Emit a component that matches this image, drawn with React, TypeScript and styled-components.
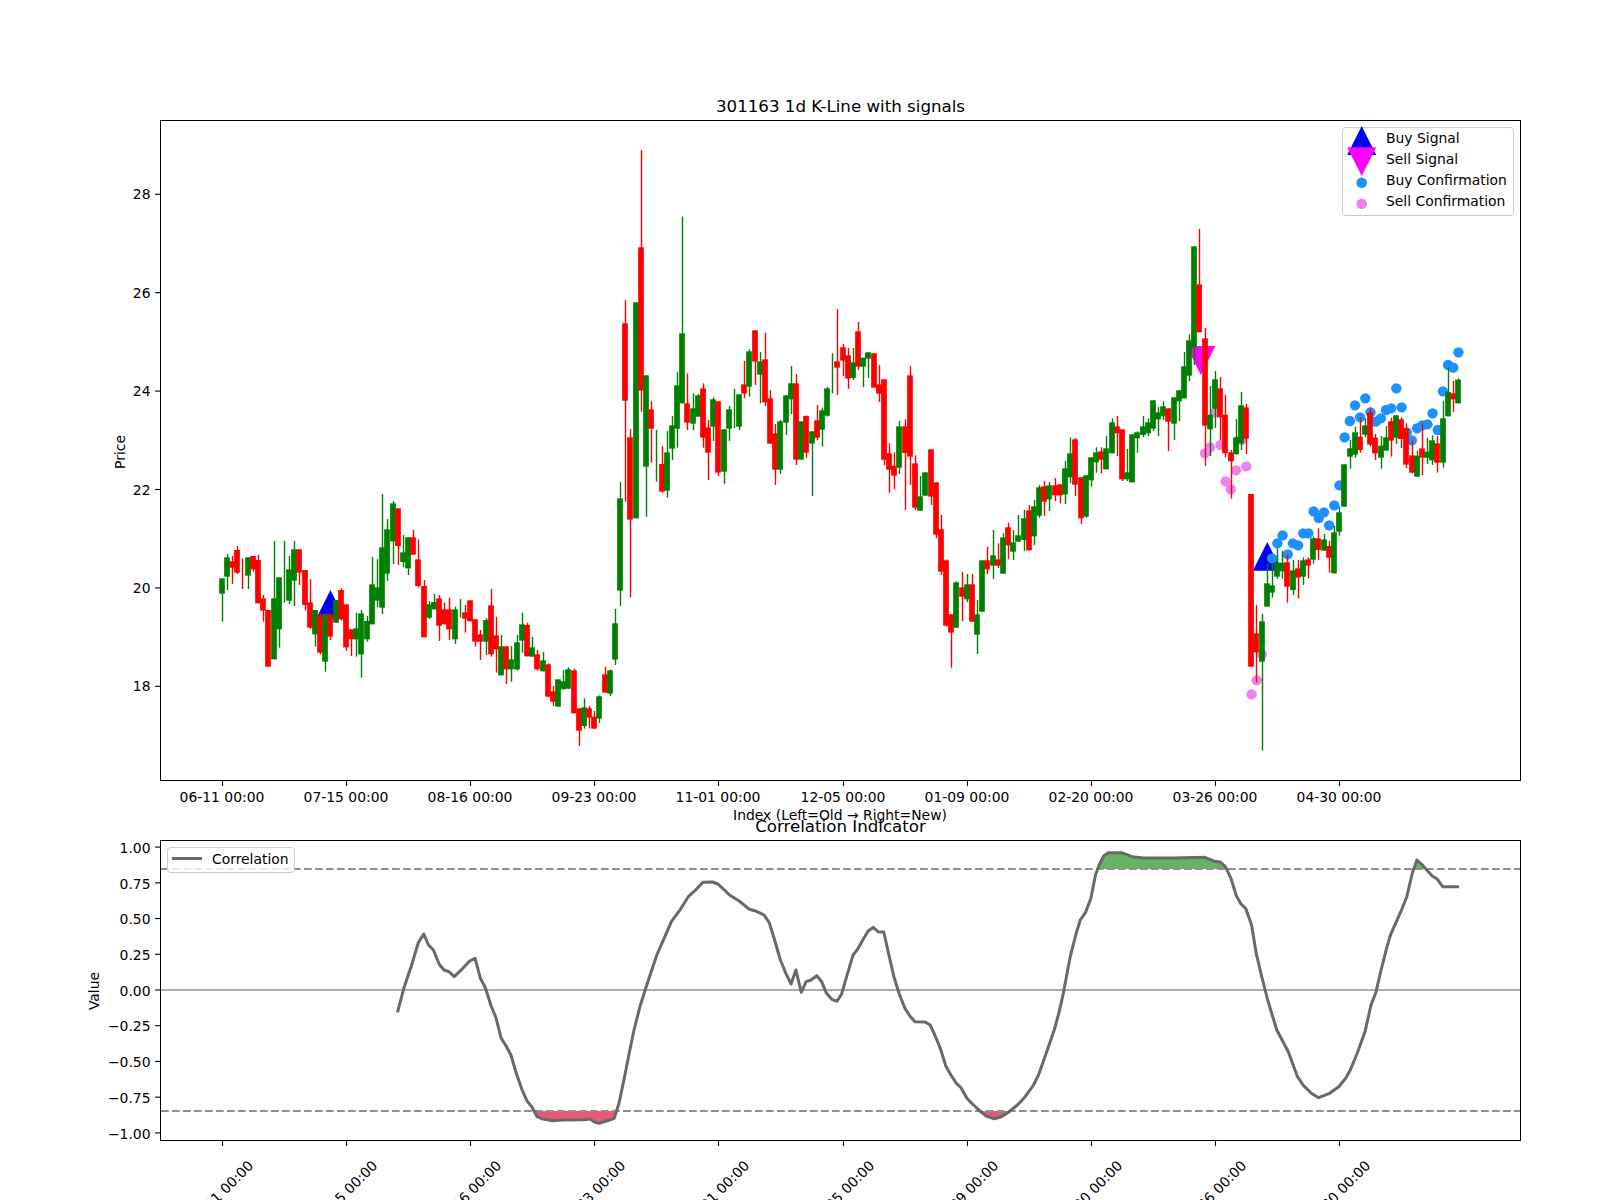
import React from 'react';
import styled, { createGlobalStyle } from 'styled-components';

type Row = [string, number, number, number, number];
type Point = [number, number];

const GlobalStyle = createGlobalStyle`
  html, body {
    margin: 0;
    padding: 0;
    background: #fff;
    overflow: hidden;
  }
  body {
    font-family: "DejaVu Sans", sans-serif;
    font-size: 13.9px;
    color: #000;
  }
`;

// candle rows are [colour, high, bodyTop, bodyBottom, low], measured on 3x crops: page y = oy + value / 3
const candleGroups: { oy: number; rows: Row[] }[] = [
  {
    oy: 480,
    rows: [
      ['g', 295, 295, 341, 425], ['g', 222, 232, 290, 330], ['r', 228, 244, 263, 312], ['r', 198, 210, 278, 282],
      ['r', 235, 281, 281, 327], ['g', 232, 232, 287, 327], ['r', 228, 228, 268, 275], ['r', 225, 240, 370, 370],
      ['r', 345, 355, 392, 425], ['r', 390, 390, 560, 560], ['g', 183, 355, 538, 538], ['g', 292, 292, 448, 503],
      ['g', 183, 275, 275, 368], ['g', 228, 268, 362, 372], ['g', 183, 208, 302, 378], ['r', 208, 208, 278, 315],
      ['r', 270, 270, 375, 392], ['r', 297, 367, 443, 447], ['g', 390, 390, 463, 500], ['r', 400, 405, 518, 523],
      ['g', 400, 402, 545, 575], ['r', 403, 403, 470, 480], ['g', 360, 360, 428, 428], ['r', 325, 330, 418, 422],
      ['r', 373, 373, 502, 513], ['r', 448, 448, 478, 528], ['g', 398, 445, 478, 530], ['g', 390, 400, 523, 593],
      ['g', 408, 423, 478, 485], ['g', 231, 313, 433, 433], ['g', 237, 322, 362, 382], ['g', 42, 202, 383, 402],
      ['g', 117, 148, 281, 303], ['g', 63, 70, 184, 252], ['r', 85, 85, 198, 255], ['g', 165, 217, 246, 262],
      ['g', 172, 172, 265, 285], ['r', 150, 172, 224, 224], ['r', 178, 238, 318, 322],
    ],
  },
  {
    oy: 480,
    rows: [
      ['r', 300, 318, 472, 472], ['g', 363, 373, 413, 417], ['g', 342, 366, 388, 388], ['r', 345, 355, 437, 483],
      ['r', 368, 388, 433, 433], ['r', 353, 388, 448, 480], ['g', 380, 388, 478, 492], ['g', 357, 385, 385, 413],
      ['r', 375, 397, 416, 458], ['r', 361, 361, 424, 424], ['r', 418, 418, 485, 500], ['r', 450, 463, 485, 540],
      ['g', 414, 420, 485, 525], ['r', 327, 376, 523, 530], ['r', 410, 466, 508, 578], ['g', 465, 499, 586, 586],
      ['r', 499, 499, 568, 612], ['g', 498, 538, 568, 605], ['g', 465, 487, 568, 572], ['g', 398, 433, 482, 518],
      ['r', 428, 435, 529, 529], ['g', 470, 502, 530, 530], ['r', 510, 523, 568, 572], ['g', 516, 541, 574, 574],
      ['r', 550, 553, 650, 650], ['r', 618, 634, 665, 678], ['g', 598, 598, 680, 680], ['g', 570, 604, 628, 628],
      ['g', 562, 568, 626, 626], ['r', 566, 571, 700, 700], ['r', 685, 685, 752, 798], ['g', 655, 682, 738, 746],
      ['r', 678, 685, 713, 745], ['r', 693, 710, 746, 746], ['g', 646, 649, 716, 729], ['r', 560, 583, 638, 638],
      ['g', 569, 571, 641, 648], ['g', 387, 430, 539, 555], ['g', 6, 55, 332, 378],
    ],
  },
  {
    oy: 140,
    rows: [
      ['r', 480, 550, 782, 1085], ['r', 867, 892, 1139, 1372], ['g', 487, 487, 1135, 1135], ['r', 30, 322, 752, 815],
      ['g', 706, 706, 980, 1130], ['r', 783, 808, 866, 968], ['g', 870, 948, 948, 1025], ['r', 918, 972, 1055, 1058],
      ['g', 873, 937, 1052, 1073], ['g', 828, 856, 926, 960], ['g', 696, 736, 866, 923], ['g', 230, 580, 790, 790],
      ['r', 700, 790, 848, 870], ['g', 760, 805, 851, 870], ['g', 762, 766, 830, 830], ['r', 730, 745, 893, 923],
      ['r', 840, 862, 938, 1020], ['g', 772, 778, 860, 903], ['r', 784, 784, 998, 1008], ['g', 868, 868, 995, 1032],
      ['g', 798, 808, 866, 903], ['g', 746, 805, 805, 864], ['g', 763, 763, 860, 870], ['r', 663, 733, 761, 775],
      ['g', 628, 634, 740, 770], ['r', 571, 571, 665, 735], ['g', 636, 664, 704, 790], ['r', 578, 658, 787, 798],
      ['r', 750, 775, 911, 911], ['r', 852, 880, 989, 1035], ['g', 840, 844, 989, 1002], ['g', 766, 766, 848, 885],
      ['g', 678, 730, 778, 822], ['r', 702, 730, 959, 975], ['g', 844, 844, 959, 959], ['r', 826, 828, 938, 953],
      ['g', 874, 874, 911, 1068], ['r', 795, 841, 893, 900], ['g', 803, 811, 869, 920], ['g', 741, 745, 827, 830],
      ['g', 640, 700, 700, 760], ['r', 507, 664, 683, 765],
    ],
  },
  {
    oy: 290,
    rows: [
      ['r', 162, 172, 212, 258], ['r', 174, 196, 266, 297], ['g', 174, 217, 264, 270], ['r', 96, 124, 230, 240],
      ['g', 203, 203, 230, 291], ['g', 187, 187, 206, 264], ['r', 190, 190, 293, 293], ['r', 225, 283, 311, 336],
      ['r', 268, 268, 509, 525], ['r', 460, 490, 539, 608], ['r', 487, 527, 557, 598], ['g', 393, 409, 533, 552],
      ['r', 388, 409, 489, 660], ['r', 228, 256, 500, 585], ['r', 496, 520, 653, 660], ['g', 558, 619, 662, 662],
      ['g', 547, 547, 617, 617], ['r', 478, 478, 620, 645], ['r', 577, 577, 734, 745], ['r', 675, 718, 845, 855],
      ['r', 808, 811, 1007, 1010], ['r', 973, 973, 1028, 1133], ['g', 874, 877, 1013, 1013], ['r', 846, 892, 920, 993],
      ['g', 852, 883, 928, 937], ['r', 852, 883, 995, 995], ['g', 930, 973, 1034, 1092], ['g', 811, 811, 965, 965],
      ['r', 770, 811, 838, 852], ['g', 720, 796, 827, 867], ['r', 760, 808, 827, 834], ['g', 730, 742, 851, 851],
      ['r', 698, 712, 766, 808], ['g', 720, 757, 785, 810], ['g', 675, 736, 755, 755], ['g', 660, 685, 750, 783],
      ['r', 645, 661, 781, 781], ['g', 630, 649, 739, 765], ['g', 585, 592, 677, 683], ['r', 573, 589, 635, 678],
      ['g', 576, 586, 628, 663], ['r', 564, 586, 616, 633], ['r', 583, 583, 616, 640],
    ],
  },
  {
    oy: 220,
    rows: [
      ['g', 723, 745, 823, 852], ['g', 652, 700, 772, 790], ['r', 654, 658, 794, 828], ['r', 772, 772, 895, 912],
      ['g', 766, 766, 890, 893], ['g', 712, 712, 781, 800], ['g', 682, 697, 727, 758], ['r', 682, 694, 719, 760],
      ['g', 648, 685, 748, 748], ['g', 595, 607, 700, 700], ['r', 588, 619, 640, 708], ['r', 628, 628, 778, 783],
      ['g', 687, 757, 778, 783], ['g', 643, 643, 787, 787], ['g', 634, 637, 655, 698], ['g', 588, 619, 645, 651],
      ['g', 595, 607, 640, 648], ['g', 541, 541, 626, 633], ['g', 561, 577, 598, 648], ['g', 544, 559, 589, 600],
      ['r', 565, 565, 605, 693], ['g', 532, 532, 611, 660], ['g', 511, 511, 544, 603], ['g', 396, 439, 535, 535],
      ['g', 343, 361, 467, 483], ['g', 79, 79, 382, 435], ['r', 27, 193, 337, 337], ['r', 324, 355, 617, 738],
      ['g', 498, 584, 628, 708], ['g', 453, 478, 566, 624], ['r', 471, 505, 592, 660], ['r', 525, 584, 700, 712],
      ['r', 690, 697, 724, 836], ['g', 597, 652, 703, 703], ['g', 516, 556, 670, 690], ['r', 552, 562, 656, 702],
    ],
  },
  {
    oy: 330,
    rows: [
      ['r', 492, 492, 1010, 1010], ['r', 825, 910, 967, 1058], ['g', 852, 874, 995, 1262], ['g', 700, 760, 830, 830],
      ['g', 700, 766, 788, 803], ['g', 655, 698, 740, 746], ['g', 663, 698, 724, 747], ['r', 675, 697, 770, 818],
      ['g', 690, 721, 780, 795], ['r', 690, 715, 743, 806], ['g', 682, 691, 740, 765], ['r', 682, 688, 707, 745],
      ['g', 620, 625, 689, 701], ['r', 595, 625, 660, 690], ['g', 612, 628, 662, 662], ['r', 632, 648, 683, 728],
      ['g', 588, 607, 730, 730], ['g', 530, 547, 605, 617], ['g', 403, 403, 530, 530], ['g', 330, 355, 380, 416],
      ['g', 290, 307, 374, 383], ['r', 262, 320, 360, 368], ['g', 265, 286, 314, 322], ['r', 232, 247, 344, 350],
      ['r', 312, 323, 370, 390], ['g', 318, 347, 383, 416], ['g', 288, 322, 362, 362], ['r', 263, 274, 332, 380],
      ['g', 256, 256, 323, 342], ['r', 262, 268, 327, 354], ['r', 280, 295, 404, 414], ['r', 333, 376, 428, 430],
      ['g', 362, 377, 440, 440], ['r', 280, 355, 383, 435], ['g', 323, 365, 383, 402], ['g', 316, 331, 391, 405],
      ['r', 318, 340, 398, 428], ['g', 213, 265, 398, 413], ['g', 113, 186, 259, 259], ['r', 153, 190, 208, 246],
      ['g', 145, 149, 220, 220],
    ],
  },
];

const candles = candleGroups.flatMap(({ oy, rows }) =>
  rows.map(([c, high, top, bottom, low]) => ({
    colour: c === 'g' ? '#008000' : '#ff0000',
    high: oy + high / 3,
    top: oy + top / 3,
    bottom: oy + bottom / 3,
    low: oy + low / 3,
  })),
);

const barX = (i: number) => 221.8 + 5.173 * i;

const buyDots = [685, 640, 616, 673, 640, 646, 610, 610, 544, 564, 547, 586, 526, 466, 322, 273, 226, 262, 205, 247, 275, 265, 240, 235, 175, 232, 307, 331, 295, 286, 283, 250, 300, 184, 105, 113, 67]
  .map((y, k): Point => [barX(203 + k) + 0.3, 330 + y / 3]);
const sellDots = [370, 352, 248, 345, 454, 478, 421, 330, 409, 1093, 1051, 973]
  .map((y, k): Point => [barX(190 + k) + 0.3, 330 + y / 3]);

const dateLabels = ['06-11 00:00', '07-15 00:00', '08-16 00:00', '09-23 00:00', '11-01 00:00', '12-05 00:00', '01-09 00:00', '02-20 00:00', '03-26 00:00', '04-30 00:00'];
const tickX = (k: number) => Math.round(barX(24 * k)) + 0.5;

const priceY = (v: number) => 194.3 + (28 - v) * 49.2;
const corrY = (v: number) => 990 - v * 142.9;

const leftCurve: Point[] = [
  [655, 667], [668, 595], [683, 530], [698, 458], [709, 432], [719, 465], [729, 480], [741, 523], [751, 540], [761, 545], [772, 560], [783, 545], [804, 513], [815, 505], [826, 565], [836, 592], [848, 648], [858, 682], [869, 745], [879, 768], [889, 795], [900, 850], [912, 900], [922, 932], [932, 950], [943, 980], [953, 986], [975, 992], [995, 990], [1040, 989], [1052, 987], [1061, 996], [1071, 1000], [1091, 991], [1102, 985], [1112, 940], [1122, 870], [1133, 790], [1143, 720], [1155, 650], [1168, 590], [1190, 495], [1205, 445], [1220, 395], [1240, 355], [1255, 320], [1270, 300], [1285, 277], [1305, 276], [1316, 282], [1328, 298], [1340, 315], [1360, 333], [1381, 358], [1392, 362], [1411, 375], [1422, 398], [1433, 450], [1445, 510], [1456, 550], [1467, 582], [1477, 540], [1488, 607], [1498, 575], [1508, 570], [1520, 557], [1530, 575], [1540, 610], [1551, 628], [1562, 634],
];
const rightCurve: Point[] = [
  [47, 612], [58, 560], [72, 495], [82, 478], [94, 448], [105, 423], [116, 412], [127, 426], [139, 426], [150, 495], [161, 560], [172, 610], [185, 655], [197, 680], [207, 695], [229, 696], [240, 705], [250, 735], [262, 775], [274, 828], [285, 855], [297, 880], [307, 893], [320, 925], [332, 942], [350, 965], [362, 978], [380, 986], [395, 980], [412, 965], [430, 945], [447, 920], [465, 885], [476, 855], [490, 800], [510, 720], [520, 670], [530, 610], [545, 500], [558, 430], [567, 390], [578, 368], [590, 325], [600, 255], [608, 225], [618, 198], [628, 188], [657, 188], [680, 200], [705, 204], [770, 204], [838, 202], [860, 214], [872, 216], [883, 230], [895, 265], [907, 318], [917, 342], [927, 355], [940, 405], [950, 490], [962, 560], [975, 630], [985, 675], [995, 720], [1020, 785], [1040, 860], [1052, 885], [1070, 910], [1086, 923], [1110, 910], [1130, 890], [1145, 865], [1155, 840], [1170, 790], [1187, 725], [1200, 645], [1210, 610], [1222, 540], [1235, 470], [1243, 433], [1265, 365], [1278, 320], [1290, 250], [1300, 210], [1312, 225], [1333, 257], [1345, 268], [1356, 290], [1392, 290],
];
const curve: Point[] = [
  ...leftCurve.map(([x, y]): Point => [80 + x / 2.063, 790 + y / 3]),
  ...rightCurve.map(([x, y]): Point => [820 + x / 2.178, 790 + y / 3]),
];

const toPath = (pts: Point[]) => pts.map(([x, y]) => `${x.toFixed(1)},${y.toFixed(1)}`).join(' ');

// pieces of the curve past a level, closed along that level
const regionsPast = (pts: Point[], level: number, sign: number) => {
  const regions: Point[][] = [];
  let open: Point[] | null = null;
  pts.forEach(([x, y], i) => {
    const past = (y - level) * sign > 0;
    if (i > 0 && past !== (open !== null)) {
      const [px, py] = pts[i - 1];
      const cross: Point = [px + ((level - py) / (y - py)) * (x - px), level];
      if (open) {
        open.push(cross);
        regions.push(open);
        open = null;
      } else {
        open = [cross];
      }
    }
    if (past && open) open.push([x, y]);
  });
  return regions;
};

const Figure = styled.div`
  width: 1600px;
  height: 1200px;
  overflow: hidden;
  padding-left: 160px;
  box-sizing: border-box;
`;

const Panel = styled.section<{ $top: number }>`
  width: 1361px;
  padding-top: ${({ $top }) => $top}px;
`;

const PanelTitle = styled.h2`
  margin: 0 0 1px;
  height: 25px;
  line-height: 25px;
  font-size: 16.67px;
  font-weight: 400;
  text-align: center;
  white-space: nowrap;
`;

const PlotFrame = styled.div<{ $height: number }>`
  position: relative;
  width: 1361px;
  height: ${({ $height }) => $height}px;
  box-shadow: inset 0 0 0 1px #000;
`;

const PlotCanvas = styled.svg`
  display: block;
  width: 100%;
  height: 100%;
  overflow: visible;
`;

const TickLabel = styled.text`
  font-size: 13.9px;
  fill: #000;
  dominant-baseline: central;
`;

const AxisLabel = styled.text`
  font-size: 13.9px;
  fill: #000;
  text-anchor: middle;
  dominant-baseline: central;
`;

const Legend = styled.div<{ $left?: number; $right?: number; $top: number; $width: number; $height: number; $pad?: number }>`
  position: absolute;
  top: ${({ $top }) => $top}px;
  ${({ $left }) => ($left !== undefined ? `left: ${$left}px;` : '')}
  ${({ $right }) => ($right !== undefined ? `right: ${$right}px;` : '')}
  width: ${({ $width }) => $width}px;
  height: ${({ $height }) => $height}px;
  box-sizing: border-box;
  padding-top: ${({ $pad }) => $pad ?? 0}px;
  background: rgba(255, 255, 255, 0.8);
  border: 1px solid #ccc;
  border-radius: 4px;
`;

const LegendRow = styled.div`
  display: flex;
  align-items: center;
  height: 21px;
  white-space: nowrap;
`;

const LegendSwatch = styled.svg<{ $width?: number }>`
  flex: none;
  display: block;
  width: ${({ $width }) => $width ?? 43}px;
  height: 21px;
  overflow: visible;
`;

const LegendText = styled.span`
  font-size: 13.9px;
  line-height: 21px;
`;

const Candle = ({ i }: { i: number }) => {
  const { colour, high, top, bottom, low } = candles[i];
  const x = Math.round(barX(i));
  return (
    <g>
      <line x1={x + 0.5} x2={x + 0.5} y1={high} y2={low} stroke={colour} strokeWidth={1.4} />
      {bottom > top && <rect x={x - 2.85} y={top} width={5.7} height={bottom - top} fill={colour} />}
    </g>
  );
};

const triangle = (x: number, tip: number, base: number) => `${x - 14.5},${base} ${x + 14.5},${base} ${x},${tip}`;

const PricePlot = () => (
  <PlotCanvas viewBox="160 120 1361 661">
    <polygon points={triangle(barX(21), 590, 619)} fill="#0000ff" />
    <polygon points={triangle(1267.3, 542, 570.7)} fill="#0000ff" />
    <polygon points={triangle(1200.8, 375, 346)} fill="#ff00ff" />
    {sellDots.map(([x, y]) => <circle key={x} cx={x} cy={y} r={5.2} fill="#ee82ee" />)}
    {buyDots.map(([x, y]) => <circle key={x} cx={x} cy={y} r={5.2} fill="#1e90ff" />)}
    {candles.map((_, i) => <Candle key={i} i={i} />)}
    {[18, 20, 22, 24, 26, 28].map((v) => (
      <g key={v}>
        <line x1={155.1} x2={160} y1={priceY(v)} y2={priceY(v)} stroke="#000" strokeWidth={1.1} />
        <TickLabel x={150.5} y={priceY(v)} textAnchor="end">{v}</TickLabel>
      </g>
    ))}
    {dateLabels.map((label, k) => (
      <g key={label}>
        <line x1={tickX(k)} x2={tickX(k)} y1={781} y2={786} stroke="#000" strokeWidth={1.1} />
        <TickLabel x={tickX(k) - 0.5} y={796.5} textAnchor="middle">{label}</TickLabel>
      </g>
    ))}
    <AxisLabel x={840} y={815}>Index (Left=Old → Right=New)</AxisLabel>
    <AxisLabel x={119.5} y={452} transform="rotate(-90 119.5 452)">Price</AxisLabel>
  </PlotCanvas>
);

const CorrelationPlot = () => (
  <PlotCanvas viewBox="160 840 1361 301">
    {regionsPast(curve, 1111, 1).map((pts, k) => <polygon key={k} points={toPath(pts)} fill="#dc143c" fillOpacity={0.7} />)}
    {regionsPast(curve, 869, -1).map((pts, k) => <polygon key={k} points={toPath(pts)} fill="#008000" fillOpacity={0.6} />)}
    <line x1={161} x2={1520} y1={990} y2={990} stroke="#adadad" strokeWidth={2} />
    {[869, 1111].map((y) => (
      <line key={y} x1={161} x2={1520} y1={y} y2={y} stroke="#8f8f8f" strokeWidth={2} strokeDasharray="7.7 3.3" />
    ))}
    <polyline points={toPath(curve)} fill="none" stroke="#696969" strokeWidth={3} strokeLinejoin="round" />
    {[1, 0.75, 0.5, 0.25, 0, -0.25, -0.5, -0.75, -1].map((v) => (
      <g key={v}>
        <line x1={155.1} x2={160} y1={corrY(v)} y2={corrY(v)} stroke="#000" strokeWidth={1.1} />
        <TickLabel x={150.5} y={corrY(v) + 0.7} textAnchor="end">{v.toFixed(2).replace('-', '−')}</TickLabel>
      </g>
    ))}
    {dateLabels.map((label, k) => (
      <g key={label}>
        <line x1={tickX(k)} x2={tickX(k)} y1={1141} y2={1146} stroke="#000" strokeWidth={1.1} />
        <TickLabel
          x={tickX(k) - 1.7}
          y={1193}
          textAnchor="middle"
          transform={`rotate(-45 ${tickX(k) - 1.7} 1193)`}
        >
          {label}
        </TickLabel>
      </g>
    ))}
    <AxisLabel x={94} y={991} transform="rotate(-90 94 991)">Value</AxisLabel>
  </PlotCanvas>
);

const PriceLegend = () => (
  <Legend $right={7} $top={7} $width={172} $height={89}>
    <LegendRow>
      <LegendSwatch viewBox="0 0 43 21"><polygon points="4.2,27 33.2,27 18.7,-2" fill="#0000ff" /></LegendSwatch>
      <LegendText>Buy Signal</LegendText>
    </LegendRow>
    <LegendRow>
      <LegendSwatch viewBox="0 0 43 21"><polygon points="4.2,-1.7 33.2,-1.7 18.7,27" fill="#ff00ff" /></LegendSwatch>
      <LegendText>Sell Signal</LegendText>
    </LegendRow>
    <LegendRow>
      <LegendSwatch viewBox="0 0 43 21"><circle cx={18.7} cy={12.7} r={5.3} fill="#1e90ff" /></LegendSwatch>
      <LegendText>Buy Confirmation</LegendText>
    </LegendRow>
    <LegendRow>
      <LegendSwatch viewBox="0 0 43 21"><circle cx={18.7} cy={12.7} r={5.3} fill="#ee82ee" /></LegendSwatch>
      <LegendText>Sell Confirmation</LegendText>
    </LegendRow>
  </Legend>
);

const CorrelationLegend = () => (
  <Legend $left={7} $top={7} $width={128} $height={26} $pad={1}>
    <LegendRow>
      <LegendSwatch $width={44} viewBox="0 0 44 21">
        <line x1={4} x2={34} y1={9.5} y2={9.5} stroke="#696969" strokeWidth={3} />
      </LegendSwatch>
      <LegendText>Correlation</LegendText>
    </LegendRow>
  </Legend>
);

export default function App() {
  return (
    <>
      <GlobalStyle />
      <Figure>
        <Panel $top={94}>
          <PanelTitle>301163 1d K-Line with signals</PanelTitle>
          <PlotFrame $height={661}>
            <PricePlot />
            <PriceLegend />
          </PlotFrame>
        </Panel>
        <Panel $top={33}>
          <PanelTitle>Correlation Indicator</PanelTitle>
          <PlotFrame $height={301}>
            <CorrelationPlot />
            <CorrelationLegend />
          </PlotFrame>
        </Panel>
      </Figure>
    </>
  );
}
